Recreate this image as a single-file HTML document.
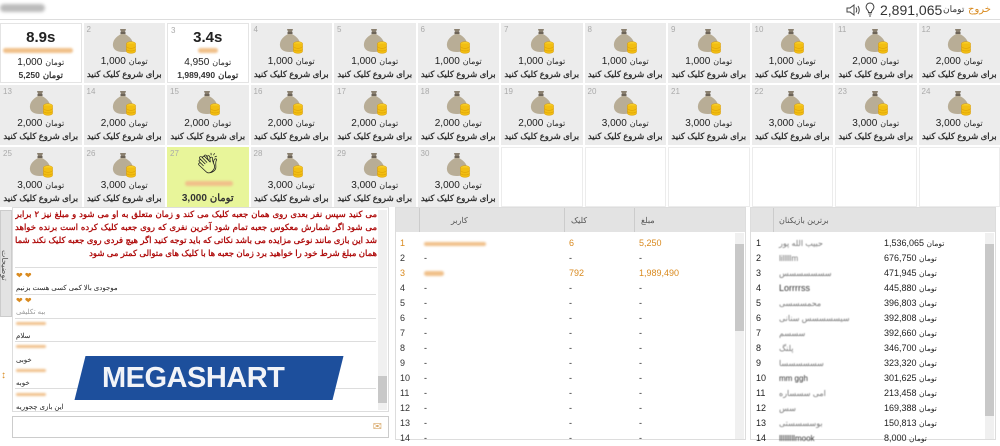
<!DOCTYPE html>
<html><head><meta charset="utf-8">
<style>
*{box-sizing:border-box;margin:0;padding:0}
body{width:1000px;height:440px;overflow:hidden;background:#fff;font-family:"Liberation Sans","Noto Sans CJK SC",sans-serif;position:relative;color:#222}
.top{position:absolute;left:0;top:0;width:1000px;height:20px;border-bottom:1px solid #ddd}
.grid{position:absolute;left:0;top:23px;width:1000px;display:grid;grid-template-columns:repeat(12,1fr);grid-template-rows:repeat(3,60px);gap:2px}
.c{background:#ececec;position:relative;text-align:center;font-size:9px}
.c.w{background:#fff;border:1px solid #e4e4e4}
.c.e{background:#fff;border:1px solid #ececec}
.c.g{background:#e8f59a}
.n{position:absolute;left:3px;top:2px;font-size:8px;color:#aaa}
.c svg{position:absolute;left:50%;margin-left:-13px;top:5px}
.a,.t.f{display:flex;justify-content:center;align-items:baseline;gap:3px;direction:ltr;flex-direction:row}
.a{position:absolute;left:0;right:0;top:33px;font-size:8px}
.a b{font-weight:normal;font-size:10px}
.t{position:absolute;left:0;right:0;top:46px;font-size:8.5px;font-weight:bold;color:#333}
.big{position:absolute;left:0;right:0;top:5px;font-size:15px;font-weight:bold}
.blur{position:absolute;height:5px;background:#f0c08a;border-radius:3px;filter:blur(1px)}
.panel{position:absolute;border:1px solid #ccc;background:#fff}
.hd{position:absolute;left:0;right:0;top:0;height:24px;background:#e3e3e3;font-size:8px;color:#555}
.sb{position:absolute;width:9px;background:#f0f0f0}
.thumb{position:absolute;background:#c8c8c8}
</style></head><body>
<svg width="0" height="0" style="position:absolute"><defs><symbol id="bag" viewBox="0 0 26 26"><path d="M9 1 L15 1 L14 4 L10 4Z" fill="#8a8070"/><rect x="9.5" y="4" width="5" height="2" fill="#6d6458"/><path d="M10 6 L14 6 Q23 11 22 18 Q21 24 12 24 Q3 24 2 18 Q1 11 10 6Z" fill="#b8ad96"/><ellipse cx="20" cy="15.5" rx="4.5" ry="1.8" fill="#f7cf2a" stroke="#d99a00" stroke-width=".5"/><path d="M15.5 15.5v8a4.5 1.8 0 0 0 9 0v-8" fill="#f2be12" stroke="#d99a00" stroke-width=".5"/><path d="M15.5 18.5a4.5 1.8 0 0 0 9 0M15.5 21.2a4.5 1.8 0 0 0 9 0" fill="none" stroke="#d99a00" stroke-width=".5"/></symbol></defs></svg>

<div class="top">
<div style="position:absolute;left:0;top:4px;width:45px;height:8px;background:#bbb;border-radius:4px;filter:blur(1.5px)"></div>
<svg style="position:absolute;left:846px;top:4px" width="14" height="12" viewBox="0 0 14 12"><path d="M1 4h3l4-3v10l-4-3H1z" fill="none" stroke="#444"/><path d="M10 3.5q1.5 2.5 0 5M12 2q2.5 4 0 8" fill="none" stroke="#444"/></svg>
<svg style="position:absolute;left:865px;top:2px" width="10" height="15" viewBox="0 0 10 15"><path d="M5 1a4 4 0 0 0-2.5 7c.7.7 1 1.3 1 2.5h3c0-1.2.3-1.8 1-2.5A4 4 0 0 0 5 1zM3.5 12h3M4 14h2" fill="none" stroke="#444"/></svg>
<div style="position:absolute;left:880px;top:2px;font-size:14px;color:#333">2,891,065</div>
<div style="position:absolute;left:943px;top:4px;font-size:9px;color:#333">تومان</div>
<div style="position:absolute;left:968px;top:4px;font-size:10px;color:#d98a1f">خروج</div>
</div>

<div class="grid">
<div class="c w"><div class="big">8.9s</div><div class="blur" style="left:2px;top:24px;width:70px"></div><div class="a"><b>1,000</b><span>تومان</span></div><div class="t f"><span>5,250</span><span>تومان</span></div></div>
<div class="c"><span class="n">2</span><svg width="26" height="26"><use href="#bag"/></svg><div class="a"><b>1,000</b><span>تومان</span></div><div class="t">برای شروع کلیک کنید</div></div>
<div class="c w"><span class="n">3</span><div class="big">3.4s</div><div class="blur" style="left:30px;top:24px;width:20px"></div><div class="a"><b>4,950</b><span>تومان</span></div><div class="t f"><span>1,989,490</span><span>تومان</span></div></div>
<div class="c"><span class="n">4</span><svg width="26" height="26"><use href="#bag"/></svg><div class="a"><b>1,000</b><span>تومان</span></div><div class="t">برای شروع کلیک کنید</div></div>
<div class="c"><span class="n">5</span><svg width="26" height="26"><use href="#bag"/></svg><div class="a"><b>1,000</b><span>تومان</span></div><div class="t">برای شروع کلیک کنید</div></div>
<div class="c"><span class="n">6</span><svg width="26" height="26"><use href="#bag"/></svg><div class="a"><b>1,000</b><span>تومان</span></div><div class="t">برای شروع کلیک کنید</div></div>
<div class="c"><span class="n">7</span><svg width="26" height="26"><use href="#bag"/></svg><div class="a"><b>1,000</b><span>تومان</span></div><div class="t">برای شروع کلیک کنید</div></div>
<div class="c"><span class="n">8</span><svg width="26" height="26"><use href="#bag"/></svg><div class="a"><b>1,000</b><span>تومان</span></div><div class="t">برای شروع کلیک کنید</div></div>
<div class="c"><span class="n">9</span><svg width="26" height="26"><use href="#bag"/></svg><div class="a"><b>1,000</b><span>تومان</span></div><div class="t">برای شروع کلیک کنید</div></div>
<div class="c"><span class="n">10</span><svg width="26" height="26"><use href="#bag"/></svg><div class="a"><b>1,000</b><span>تومان</span></div><div class="t">برای شروع کلیک کنید</div></div>
<div class="c"><span class="n">11</span><svg width="26" height="26"><use href="#bag"/></svg><div class="a"><b>2,000</b><span>تومان</span></div><div class="t">برای شروع کلیک کنید</div></div>
<div class="c"><span class="n">12</span><svg width="26" height="26"><use href="#bag"/></svg><div class="a"><b>2,000</b><span>تومان</span></div><div class="t">برای شروع کلیک کنید</div></div>

<div class="c"><span class="n">13</span><svg width="26" height="26"><use href="#bag"/></svg><div class="a"><b>2,000</b><span>تومان</span></div><div class="t">برای شروع کلیک کنید</div></div>
<div class="c"><span class="n">14</span><svg width="26" height="26"><use href="#bag"/></svg><div class="a"><b>2,000</b><span>تومان</span></div><div class="t">برای شروع کلیک کنید</div></div>
<div class="c"><span class="n">15</span><svg width="26" height="26"><use href="#bag"/></svg><div class="a"><b>2,000</b><span>تومان</span></div><div class="t">برای شروع کلیک کنید</div></div>
<div class="c"><span class="n">16</span><svg width="26" height="26"><use href="#bag"/></svg><div class="a"><b>2,000</b><span>تومان</span></div><div class="t">برای شروع کلیک کنید</div></div>
<div class="c"><span class="n">17</span><svg width="26" height="26"><use href="#bag"/></svg><div class="a"><b>2,000</b><span>تومان</span></div><div class="t">برای شروع کلیک کنید</div></div>
<div class="c"><span class="n">18</span><svg width="26" height="26"><use href="#bag"/></svg><div class="a"><b>2,000</b><span>تومان</span></div><div class="t">برای شروع کلیک کنید</div></div>
<div class="c"><span class="n">19</span><svg width="26" height="26"><use href="#bag"/></svg><div class="a"><b>2,000</b><span>تومان</span></div><div class="t">برای شروع کلیک کنید</div></div>
<div class="c"><span class="n">20</span><svg width="26" height="26"><use href="#bag"/></svg><div class="a"><b>3,000</b><span>تومان</span></div><div class="t">برای شروع کلیک کنید</div></div>
<div class="c"><span class="n">21</span><svg width="26" height="26"><use href="#bag"/></svg><div class="a"><b>3,000</b><span>تومان</span></div><div class="t">برای شروع کلیک کنید</div></div>
<div class="c"><span class="n">22</span><svg width="26" height="26"><use href="#bag"/></svg><div class="a"><b>3,000</b><span>تومان</span></div><div class="t">برای شروع کلیک کنید</div></div>
<div class="c"><span class="n">23</span><svg width="26" height="26"><use href="#bag"/></svg><div class="a"><b>3,000</b><span>تومان</span></div><div class="t">برای شروع کلیک کنید</div></div>
<div class="c"><span class="n">24</span><svg width="26" height="26"><use href="#bag"/></svg><div class="a"><b>3,000</b><span>تومان</span></div><div class="t">برای شروع کلیک کنید</div></div>

<div class="c"><span class="n">25</span><svg width="26" height="26"><use href="#bag"/></svg><div class="a"><b>3,000</b><span>تومان</span></div><div class="t">برای شروع کلیک کنید</div></div>
<div class="c"><span class="n">26</span><svg width="26" height="26"><use href="#bag"/></svg><div class="a"><b>3,000</b><span>تومان</span></div><div class="t">برای شروع کلیک کنید</div></div>
<div class="c g"><span class="n">27</span><div style="position:absolute;left:0;right:0;top:4px;font-size:20px">👏︎</div><div class="blur" style="left:18px;top:34px;width:48px"></div><div class="t f" style="font-size:10px"><span>3,000</span><span>تومان</span></div></div>
<div class="c"><span class="n">28</span><svg width="26" height="26"><use href="#bag"/></svg><div class="a"><b>3,000</b><span>تومان</span></div><div class="t">برای شروع کلیک کنید</div></div>
<div class="c"><span class="n">29</span><svg width="26" height="26"><use href="#bag"/></svg><div class="a"><b>3,000</b><span>تومان</span></div><div class="t">برای شروع کلیک کنید</div></div>
<div class="c"><span class="n">30</span><svg width="26" height="26"><use href="#bag"/></svg><div class="a"><b>3,000</b><span>تومان</span></div><div class="t">برای شروع کلیک کنید</div></div>
<div class="c e"></div><div class="c e"></div><div class="c e"></div><div class="c e"></div><div class="c e"></div><div class="c e"></div>
</div>

<!-- chat -->
<div style="position:absolute;left:0;top:210px;width:12px;height:107px;background:#e3e3e3;border:1px solid #ccc"></div>
<div style="position:absolute;left:0;top:250px;font-size:8px;color:#555;writing-mode:vertical-rl">توضیحات</div>
<div style="position:absolute;left:1px;top:370px;font-size:10px;color:#d98a1f">↕</div>
<div class="panel" style="left:12px;top:207px;width:377px;height:205px;border-color:#ddd">
<div style="position:absolute;left:2px;top:0;width:362px;direction:rtl;text-align:justify;color:#b01010;font-size:8.5px;font-weight:bold;line-height:13px;height:60px;overflow:hidden;border-bottom:1px solid #ddd">می کنید سپس نفر بعدی روی همان جعبه کلیک می کند و زمان متعلق به او می شود و مبلغ نیز ۲ برابر می شود اگر شمارش معکوس جعبه تمام شود آخرین نفری که روی جعبه کلیک کرده است برنده خواهد شد این بازی مانند نوعی مزایده می باشد نکاتی که باید توجه کنید اگر هیچ فردی روی جعبه کلیک نکند شما همان مبلغ شرط خود را خواهید برد زمان جعبه ها با کلیک های متوالی کمتر می شود</div>
<div style="position:absolute;left:3px;top:63px;font-size:8px;color:#d98a1f">❤ ❤</div><div style="position:absolute;left:3px;top:76px;font-size:7px">موجودی بالا کمی کسی هست بزنیم</div>
<div style="position:absolute;left:2px;right:12px;top:86px;border-top:1px solid #ddd"></div>
<div style="position:absolute;left:3px;top:88px;font-size:8px;color:#d98a1f">❤ ❤</div><div style="position:absolute;left:3px;top:100px;font-size:7px;color:#999">ببه تکلیفی</div>
<div style="position:absolute;left:2px;right:12px;top:110px;border-top:1px solid #ddd"></div>
<div class="blur" style="left:3px;top:114px;width:30px;height:3px"></div><div style="position:absolute;left:3px;top:124px;font-size:7px">سلام</div>
<div style="position:absolute;left:2px;right:12px;top:133px;border-top:1px solid #ddd"></div>
<div class="blur" style="left:3px;top:137px;width:30px;height:3px"></div><div style="position:absolute;left:3px;top:148px;font-size:7px">خوبی</div>
<div class="blur" style="left:3px;top:161px;width:30px;height:3px"></div><div style="position:absolute;left:3px;top:171px;font-size:7px">خوبه</div>
<div style="position:absolute;left:2px;right:12px;top:180px;border-top:1px solid #ddd"></div>
<div class="blur" style="left:3px;top:185px;width:30px;height:3px"></div><div style="position:absolute;left:3px;top:195px;font-size:7px">این بازی چجوریه</div>
<div class="sb" style="right:1px;top:2px;height:200px"></div><div class="thumb" style="right:1px;top:168px;width:9px;height:27px"></div>
</div>
<div style="position:absolute;left:12px;top:416px;width:377px;height:22px;border:1px solid #ccc;background:#fff"><span style="position:absolute;right:6px;top:3px;font-size:11px;color:#d9a96a">✉</span></div>

<!-- logo -->
<div style="position:absolute;left:80px;top:356px;width:258px;height:44px;background:#1d4f9c;transform:skewX(-14deg)"></div>
<div style="position:absolute;left:102px;top:362px;font-size:29px;font-weight:bold;color:#f2f4f8;letter-spacing:-0.5px">MEGASHART</div>

<!-- middle table -->
<div class="panel" style="left:395px;top:207px;width:351px;height:233px;border-color:#ddd">
<div class="hd"><span style="position:absolute;left:55px;top:8px">کاربر</span><span style="position:absolute;left:175px;top:8px">کلیک</span><span style="position:absolute;left:245px;top:8px">مبلغ</span>
<div style="position:absolute;left:23px;top:0;height:24px;border-left:1px solid #ccc"></div><div style="position:absolute;left:168px;top:0;height:24px;border-left:1px solid #ccc"></div><div style="position:absolute;left:238px;top:0;height:24px;border-left:1px solid #ccc"></div></div>
<div style="position:absolute;left:4px;top:28px;font-size:9px;line-height:15px;color:#333">
<div style="color:#d98a1f">1</div><div>2</div><div style="color:#d98a1f">3</div><div>4</div><div>5</div><div>6</div><div>7</div><div>8</div><div>9</div><div>10</div><div>11</div><div>12</div><div>13</div><div>14</div></div>
<div style="position:absolute;left:28px;top:28px;font-size:9px;line-height:15px"><div><span class="blur" style="position:relative;display:inline-block;width:62px;height:4px"></span></div><div>-</div><div><span class="blur" style="position:relative;display:inline-block;width:20px;height:5px"></span></div><div>-</div><div>-</div><div>-</div><div>-</div><div>-</div><div>-</div><div>-</div><div>-</div><div>-</div><div>-</div><div>-</div></div>
<div style="position:absolute;left:173px;top:28px;font-size:9px;line-height:15px"><div style="color:#d98a1f">6</div><div>-</div><div style="color:#d98a1f">792</div><div>-</div><div>-</div><div>-</div><div>-</div><div>-</div><div>-</div><div>-</div><div>-</div><div>-</div><div>-</div><div>-</div></div>
<div style="position:absolute;left:243px;top:28px;font-size:9px;line-height:15px"><div style="color:#d98a1f">5,250</div><div>-</div><div style="color:#d98a1f">1,989,490</div><div>-</div><div>-</div><div>-</div><div>-</div><div>-</div><div>-</div><div>-</div><div>-</div><div>-</div><div>-</div><div>-</div></div>
<div class="sb" style="right:1px;top:25px;height:206px"></div><div class="thumb" style="right:1px;top:36px;width:9px;height:87px"></div>
</div>

<!-- right table -->
<div class="panel" style="left:750px;top:207px;width:246px;height:233px;border-color:#ddd">
<div class="hd"><span style="position:absolute;left:28px;top:8px">برترین بازیکنان</span><div style="position:absolute;left:22px;top:0;height:24px;border-left:1px solid #ccc"></div></div>
<div style="position:absolute;left:5px;top:28px;font-size:9px;line-height:15px"><div>1</div><div>2</div><div>3</div><div>4</div><div>5</div><div>6</div><div>7</div><div>8</div><div>9</div><div>10</div><div>11</div><div>12</div><div>13</div><div>14</div></div>
<div style="position:absolute;left:28px;top:28px;font-size:8px;line-height:15px;color:#777;filter:blur(.4px)"><div>حبیب الله پور</div><div>lilllllm</div><div>سسسسسسس</div><div style="color:#333;font-size:9px">Lorrrrss</div><div>محمسسسی</div><div>سیسسسسس سنانی</div><div>سسسم</div><div>پلنگ</div><div>سسسسسسا</div><div style="color:#333">mm ggh</div><div>امی سسساره</div><div>سس</div><div>بوسسسستی</div><div style="color:#333">lllllllllmook</div></div>
<div style="position:absolute;left:133px;top:28px;font-size:9px;line-height:15px"><div>1,536,065 <small>تومان</small></div><div>676,750 <small>تومان</small></div><div>471,945 <small>تومان</small></div><div>445,880 <small>تومان</small></div><div>396,803 <small>تومان</small></div><div>392,808 <small>تومان</small></div><div>392,660 <small>تومان</small></div><div>346,700 <small>تومان</small></div><div>323,320 <small>تومان</small></div><div>301,625 <small>تومان</small></div><div>213,458 <small>تومان</small></div><div>169,388 <small>تومان</small></div><div>150,813 <small>تومان</small></div><div>8,000 <small>تومان</small></div></div>
<div class="sb" style="right:1px;top:25px;height:206px"></div><div class="thumb" style="right:1px;top:36px;width:9px;height:172px"></div>
</div>
</body></html>
